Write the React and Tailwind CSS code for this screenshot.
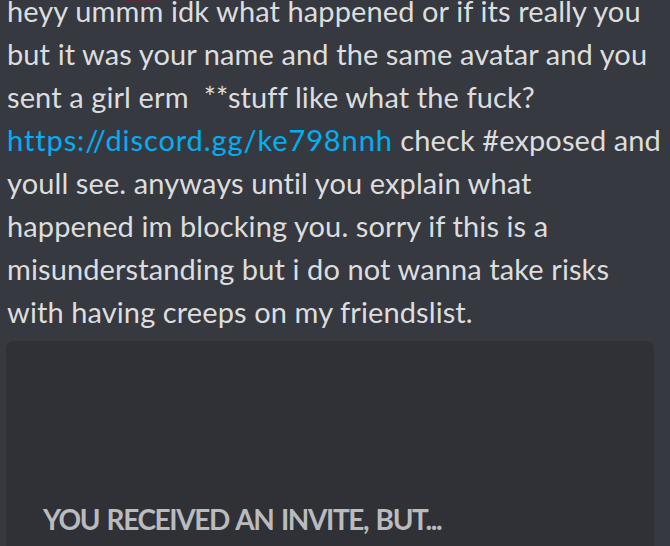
export default function App() {
  const lines = [
    "heyy ummm idk what happened or if its really you",
    "but it was your name and the same avatar and you",
    "sent a girl erm  **stuff like what the fuck?",
  ];
  const rest = [
    "youll see. anyways until you explain what",
    "happened im blocking you. sorry if this is a",
    "misunderstanding but i do not wanna take risks",
    "with having creeps on my friendslist.",
  ];
  return (
    <div className="w-[670px] h-[546px] overflow-hidden bg-[#36393f] relative" style={{ fontFamily: "Lato, 'Noto Sans', sans-serif" }}>
      <div className="absolute left-[126px] top-0 w-[34px] h-[2px] bg-[#5a2a36]" />
      <div className="relative -mt-[11px] pl-[7px] text-[29px] leading-[43px] tracking-[0.1px] text-[#dcddde] whitespace-pre">
        {lines.map((l) => (
          <div key={l}>{l}</div>
        ))}
        <div>
          <span className="text-[#00aff4] tracking-[0.9px]">https://discord.gg/ke798nnh</span> check #exposed and
        </div>
        {rest.map((l) => (
          <div key={l}>{l}</div>
        ))}
      </div>
      <div className="ml-[6px] mt-[8px] w-[648px] h-[300px] rounded-[8px] bg-[#2f3136] pt-[162px] pl-[37px]">
        <div className="text-[28px] font-bold uppercase text-[#b9bbbe] leading-[32px] tracking-[-1.4px] [word-spacing:2px] whitespace-pre">
          You received an invite, but...
        </div>
      </div>
    </div>
  );
}
